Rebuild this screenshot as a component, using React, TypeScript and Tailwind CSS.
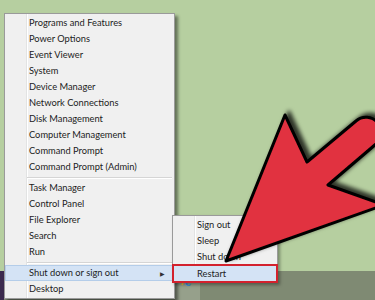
import React from "react";

const group1 = [
  "Programs and Features",
  "Power Options",
  "Event Viewer",
  "System",
  "Device Manager",
  "Network Connections",
  "Disk Management",
  "Computer Management",
  "Command Prompt",
  "Command Prompt (Admin)",
];
const group2 = ["Task Manager", "Control Panel", "File Explorer", "Search", "Run"];

function Sep() {
  return (
    <div className="h-[5px] flex flex-col justify-center pl-[22px] pr-[2px]">
      <div className="h-px bg-[#d5d5d5] border-b border-white box-content" />
    </div>
  );
}

function Row({ label }: { label: string }) {
  return (
    <div className="h-4 flex items-center pl-[24px] whitespace-nowrap">{label}</div>
  );
}

export default function App() {
  return (
    <div
      className="relative w-[375px] h-[300px] overflow-hidden flex flex-col bg-[#b6cfa0] text-[#1c1c1c] text-[9.3px]"
      style={{ fontFamily: 'Lato, "Open Sans", sans-serif' }}
    >
      <div className="flex-1" />
      {/* taskbar */}
      <div className="h-[29px] bg-[#7f8a73] flex">
        <div className="w-[4px] bg-[#3b2a4e]" />
        <div className="ml-[171px] w-[25px] bg-[#96a08b] flex items-start justify-center pt-[2px]">
          <svg width="16" height="16" viewBox="0 0 16 16">
            <path d="M2 12 C5 4 12 2 14 4" stroke="#e8b83a" strokeWidth="1.6" fill="none" />
            <text x="8" y="13" fontSize="12" fill="#3a8fd8" textAnchor="middle" fontFamily="Liberation Sans, sans-serif" fontWeight="bold">e</text>
          </svg>
        </div>
      </div>

      {/* main context menu */}
      <div className="absolute left-[4px] top-[13px] w-[171px] h-[286px] border border-[#9a9a9a] shadow-[3px_3px_3px_rgba(0,0,0,0.45)] pt-[1px] bg-[linear-gradient(to_right,#f0f0f0_21px,#e2e3e3_21px,#e2e3e3_22px,#ffffff_22px,#ffffff_23px,#f0f0f0_23px)]">
        {group1.map((l) => (
          <Row key={l} label={l} />
        ))}
        <Sep />
        {group2.map((l) => (
          <Row key={l} label={l} />
        ))}
        <Sep />
        <div className="h-4 flex items-center pl-[24px] pr-[8px] justify-between bg-[#d4e3f5] border border-[#b4cde9]">
          <span className="-ml-px">Shut down or sign out</span>
          <span className="text-[6px] text-[#333]">▶</span>
        </div>
        <Row label="Desktop" />
      </div>

      {/* submenu */}
      <div className="absolute left-[172px] top-[215px] w-[106px] h-[68px] border border-[#9a9a9a] shadow-[2px_2px_3px_rgba(0,0,0,0.35)] pt-[1px] bg-[linear-gradient(to_right,#f0f0f0_21px,#e2e3e3_21px,#e2e3e3_22px,#ffffff_22px,#ffffff_23px,#f0f0f0_23px)]">
        <Row label="Sign out" />
        <Row label="Sleep" />
        <Row label="Shut down" />
        <div className="h-[19px] -mx-px -mt-[1px] flex items-center pl-[23px] border-[2.5px] border-[#d3212d] bg-[#d4e3f5] whitespace-nowrap">
          Restart
        </div>
      </div>

      {/* red arrow */}
      <svg className="absolute inset-0 pointer-events-none" width="375" height="300" viewBox="0 0 375 300">
        <defs>
          <filter id="sh" x="-20%" y="-20%" width="140%" height="140%">
            <feDropShadow dx="4" dy="-3" stdDeviation="2.2" floodColor="#000" floodOpacity="0.75" />
          </filter>
        </defs>
        <path
          d="M226 261 L285 115 L307 162 L356 121 A15 15 0 0 1 376 144 L328 185 L384 205 Z"
          fill="#e1303f"
          stroke="#000"
          strokeWidth="3"
          strokeLinejoin="round"
          filter="url(#sh)"
        />
      </svg>
    </div>
  );
}
